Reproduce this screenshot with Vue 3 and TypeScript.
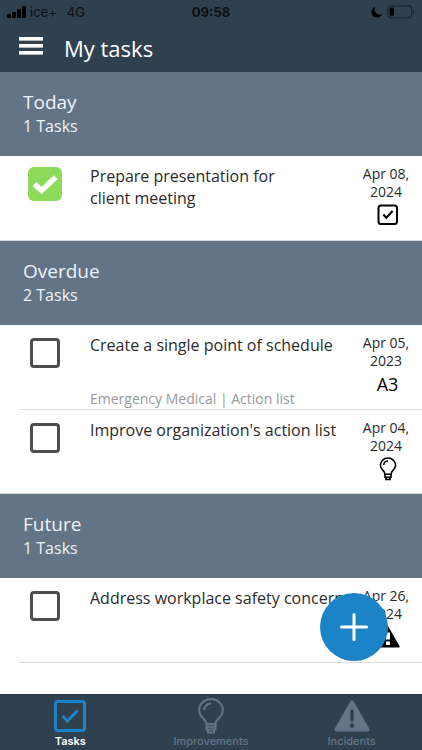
<script setup lang="ts">
import { ref, reactive } from 'vue'

type Kind = 'check' | 'a3' | 'bulb' | 'warning'

interface Task {
  id: string
  title: string
  note?: string
  day: string
  year: string
  kind: Kind
  done: boolean
}

interface Group {
  name: string
  tasks: Task[]
}

const groups = reactive<Group[]>([
  {
    name: 'Today',
    tasks: [
      { id: 't1', title: 'Prepare presentation for\nclient meeting', day: 'Apr 08,', year: '2024', kind: 'check', done: true },
    ],
  },
  {
    name: 'Overdue',
    tasks: [
      { id: 't2', title: 'Create a single point of schedule', note: 'Emergency Medical | Action list', day: 'Apr 05,', year: '2023', kind: 'a3', done: false },
      { id: 't3', title: "Improve organization's action list", day: 'Apr 04,', year: '2024', kind: 'bulb', done: false },
    ],
  },
  {
    name: 'Future',
    tasks: [
      { id: 't4', title: 'Address workplace safety concern', day: 'Apr 26,', year: '2024', kind: 'warning', done: false },
    ],
  },
])

const tabs = ['Tasks', 'Improvements', 'Incidents'] as const
const active = ref<string>('Tasks')
</script>

<template>
  <div class="app">
    <header class="top">
      <div class="status">
        <div class="carrier">
          <svg width="19" height="12" viewBox="0 0 19 12" aria-hidden="true">
            <rect x="0" y="8" width="4" height="4" rx="1" />
            <rect x="5" y="6" width="4" height="6" rx="1" />
            <rect x="10" y="3" width="4" height="9" rx="1" />
            <rect x="15" y="0" width="4" height="12" rx="1" />
          </svg>
          <span>ice+</span>
          <span class="network">4G</span>
        </div>
        <time class="clock">09:58</time>
        <div class="power">
          <svg width="12" height="12" viewBox="0 0 12 12" aria-hidden="true">
            <path d="M4.3.7A5.6 5.6 0 1 0 11.3 8 5.3 5.3 0 0 1 4.3.7Z" />
          </svg>
          <svg width="28" height="14" viewBox="0 0 28 14" aria-hidden="true">
            <rect x=".8" y=".8" width="24" height="12" rx="3.5" fill="none" stroke="#1c2733" stroke-width="1.2" />
            <rect x="2.5" y="2.5" width="4.5" height="8.6" rx="1.8" />
            <path d="M26 4.8c1.6.6 1.6 3.4 0 4Z" fill="#1c2733" />
          </svg>
        </div>
      </div>
      <div class="title-bar">
        <button class="menu" type="button" aria-label="Menu">
          <svg width="24" height="18" viewBox="0 0 24 18" fill="#fff" aria-hidden="true">
            <rect width="24" height="3.6" y="0" />
            <rect width="24" height="3.6" y="7" />
            <rect width="24" height="3.6" y="14" />
          </svg>
        </button>
        <h1>My tasks</h1>
      </div>
    </header>

    <main class="list">
      <section v-for="group in groups" :key="group.name">
        <div class="group-head">
          <h2>{{ group.name }}</h2>
          <p>{{ group.tasks.length }} Tasks</p>
        </div>
        <ul>
          <li v-for="task in group.tasks" :key="task.id" class="task">
            <div class="tick">
              <input :id="task.id" v-model="task.done" type="checkbox" />
              <svg v-if="task.done" width="26" height="22" viewBox="0 0 26 22" aria-hidden="true">
                <path d="M2.4 11 9.600 17.600 23.600 4.200" fill="none" stroke="#fff" stroke-width="5.400" />
              </svg>
            </div>
            <div class="text">
              <label :for="task.id">{{ task.title }}</label>
              <p v-if="task.note">{{ task.note }}</p>
            </div>
            <div class="due">
              <time>{{ task.day }}<br />{{ task.year }}</time>
              <span class="kind">
                <svg v-if="task.kind === 'check'" width="22" height="22" viewBox="0 0 22 22" fill="none" stroke="#000" aria-hidden="true">
                  <rect x="1.5" y="1.5" width="18.5" height="18.5" rx="2.5" stroke-width="2" />
                  <path d="m6.3 10.6 3 3.1 6.3-6.6" stroke-width="2.2" />
                </svg>
                <span v-else-if="task.kind === 'a3'" class="a3">A3</span>
                <svg v-else-if="task.kind === 'bulb'" width="18" height="24" viewBox="0 0 18 24" fill="none" stroke="#000" stroke-width="1.6" aria-hidden="true">
                  <path d="M6 17.2c0-3.3-4.6-4.6-4.6-9A7.5 7.3 0 0 1 9 1a7.5 7.3 0 0 1 7.6 7.2c0 4.4-4.6 5.7-4.6 9Z" />
                  <path d="M4.7 8A4.3 4.1 0 0 1 9 4" />
                  <path d="M6 17v3.3h6V17M7 20.5v2h4v-2" />
                </svg>
                <svg v-else width="24" height="22" viewBox="0 0 24 22" aria-hidden="true">
                  <path d="M12 0 23.6 20.2Q24 21.600 22.600 21.600H1.400Q0 21.600.4 20.200Z" />
                  <path d="M10 6.500h4v7h-4ZM10 15.500h4v3.500h-4Z" fill="#fff" />
                </svg>
              </span>
            </div>
          </li>
        </ul>
      </section>
    </main>

    <button class="add" type="button" aria-label="Add task">
      <svg width="28" height="28" viewBox="0 0 28 28" stroke="#fff" stroke-width="3" stroke-linecap="round" aria-hidden="true">
        <path d="M14 1.5v25M1.5 14h25" />
      </svg>
    </button>

    <nav class="tabs">
      <button v-for="tab in tabs" :key="tab" type="button" :class="{ active: active === tab }" @click="active = tab">
        <svg v-if="tab === 'Tasks'" width="32" height="36" viewBox="0 0 32 36" fill="none" stroke="currentColor" aria-hidden="true">
          <rect x="1.5" y="3.5" width="29" height="29" rx="2.5" stroke-width="3" />
          <path d="m8.5 18 5 5 10-10.5" stroke-width="3" />
        </svg>
        <svg v-else-if="tab === 'Improvements'" width="28" height="36" viewBox="0 0 28 36" fill="none" stroke="currentColor" stroke-width="2" aria-hidden="true">
          <path d="M9.5 26c0-5-7.3-6.500-7.300-13.600A11.800 11.400 0 0 1 14 1a11.800 11.400 0 0 1 11.800 11.400C25.800 19.500 18.500 21 18.500 26Z" />
          <path d="M7 12A7 6.5 0 0 1 14 5.5" />
          <path d="M9.5 26v5.5h9V26M9.5 28.7h9M11 32v2.5h6V32" />
        </svg>
        <svg v-else width="36" height="36" viewBox="0 0 36 36" aria-hidden="true">
          <path d="M18 4.5 33.5 31.500H2.500Z" fill="currentColor" stroke="currentColor" stroke-width="4" stroke-linejoin="round" />
          <path d="M18 13v9" stroke="#2f404f" stroke-width="3.4" stroke-linecap="round" />
          <circle cx="18" cy="27.5" r="2.2" fill="#2f404f" />
        </svg>
        <span>{{ tab }}</span>
      </button>
    </nav>
  </div>
</template>

<style>
body {
  margin: 0;
  background: #fff;
}
</style>

<style scoped>
.app {
  display: flex;
  flex-direction: column;
  height: 100vh;
  font-family: 'Open Sans', 'Noto Sans', sans-serif;
  color: #2b2b2b;
}

h1,
h2,
p,
ul {
  margin: 0;
  padding: 0;
  font-weight: 400;
}

button {
  border: 0;
  padding: 0;
  background: none;
  color: inherit;
  font: inherit;
  cursor: pointer;
}

svg {
  display: block;
}

.top {
  flex: none;
  background: #2f404f;
}

.status {
  display: grid;
  grid-template-columns: 1fr auto 1fr;
  align-items: center;
  height: 24px;
  padding: 0 7px;
  color: #0b0f13;
  font-family: Inter, sans-serif;
  font-size: 13px;
}

.carrier,
.power {
  display: flex;
  align-items: center;
  gap: 4px;
}

.power {
  justify-content: flex-end;
}

.network {
  margin-left: 6px;
}

.clock {
  font-weight: 700;
}

.title-bar {
  display: flex;
  align-items: center;
  gap: 21px;
  height: 48px;
  padding: 0 19px;
  color: #fff;
}

.menu {
  padding-bottom: 4px;
}

h1 {
  font-size: 22px;
  line-height: 30px;
}

.list {
  flex: 1;
  min-height: 0;
  overflow: hidden;
}

.group-head {
  box-sizing: border-box;
  height: 84px;
  padding: 17px 23px;
  background: #637486;
  color: #eef3f8;
}

h2 {
  font-size: 19px;
  line-height: 26px;
}

.group-head p {
  font-size: 16px;
  line-height: 22px;
}

ul {
  list-style: none;
  border-bottom: 1px solid #d3dae1;
}

.task {
  display: flex;
  box-sizing: border-box;
  height: 84px;
  margin-left: 19px;
}

.task + .task {
  border-top: 1px solid #e0e0e0;
}

section:last-child ul {
  margin-left: 19px;
  border-color: #dcdcdc;
}

section:last-child .task {
  margin-left: 0;
}

.tick {
  flex: none;
  display: grid;
  place-items: center;
  width: 52px;
  height: 56px;
}

.tick > * {
  grid-area: 1 / 1;
}

.tick svg {
  pointer-events: none;
}

.tick input {
  appearance: none;
  box-sizing: border-box;
  width: 30px;
  height: 30px;
  margin: 0;
  border: 3px solid #4d4d4d;
  border-radius: 4px;
}

.tick input:checked {
  width: 34px;
  height: 34px;
  border: 0;
  border-radius: 6px;
  background: #8edb5b;
}

.text {
  flex: 1;
  min-width: 0;
  display: flex;
  flex-direction: column;
  justify-content: space-between;
  padding: 9px 0 0 19px;
}

.text label {
  font-size: 16px;
  line-height: 22px;
  white-space: pre;
}

.text p {
  color: #999;
  font-size: 14px;
  line-height: 20px;
}

.due {
  flex: none;
  display: flex;
  flex-direction: column;
  align-items: center;
  width: 72px;
  padding-top: 9px;
  font-size: 14px;
  line-height: 18px;
  text-align: center;
}

.kind {
  display: grid;
  place-items: center;
  height: 28px;
  padding-left: 3px;
  color: #000;
}

.a3 {
  font-size: 18px;
}

.add {
  position: absolute;
  right: 34px;
  bottom: 89px;
  display: grid;
  place-items: center;
  width: 68px;
  height: 68px;
  border-radius: 50%;
  background: #1c84c6;
}

.tabs {
  flex: none;
  display: grid;
  grid-template-columns: repeat(3, 1fr);
  height: 56px;
  background: #2f404f;
  color: #637486;
  font-family: Inter, sans-serif;
  font-size: 11px;
  font-weight: 500;
}

.tabs button {
  display: flex;
  flex-direction: column;
  align-items: center;
  justify-content: flex-end;
  padding-bottom: 2px;
  line-height: 14px;
}

.tabs .active svg {
  color: #1c84c6;
}

.tabs .active span {
  color: #fff;
  font-weight: 600;
}
</style>
